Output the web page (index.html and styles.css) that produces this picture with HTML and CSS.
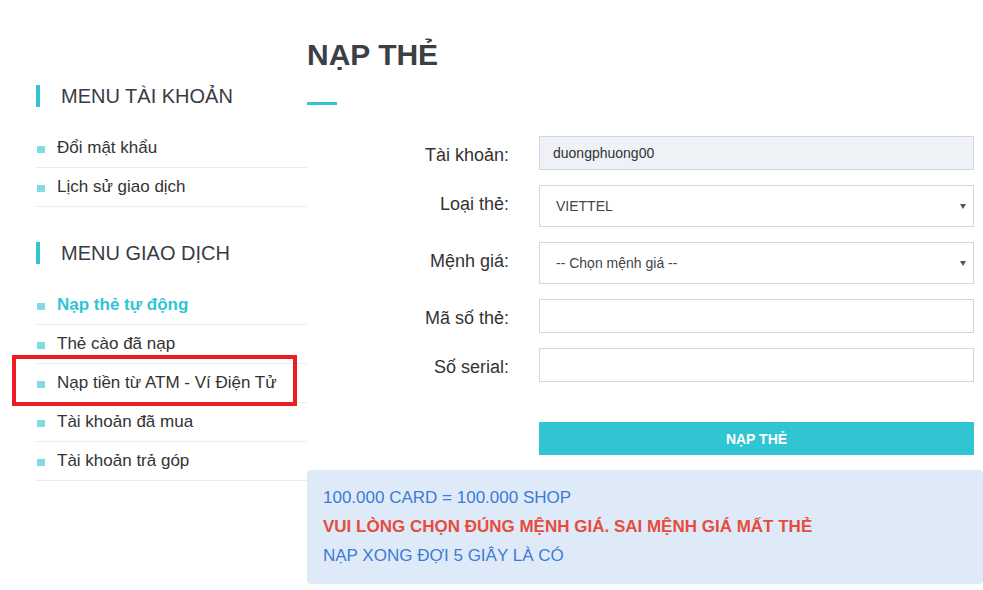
FILE: index.html
```html
<!DOCTYPE html>
<html lang="vi">
<head>
<meta charset="utf-8">
<title>Nạp thẻ</title>
<link rel="stylesheet" href="styles.css">
</head>
<body>
<div class="page">
  <aside class="sidebar">
    <h3 class="menu-title">MENU TÀI KHOẢN</h3>
    <ul class="menu">
      <li><a href="#">Đổi mật khẩu</a></li>
      <li><a href="#">Lịch sử giao dịch</a></li>
    </ul>
    <h3 class="menu-title second">MENU GIAO DỊCH</h3>
    <ul class="menu">
      <li class="active"><a href="#">Nạp thẻ tự động</a></li>
      <li><a href="#">Thẻ cào đã nạp</a></li>
      <li class="marked"><a href="#">Nạp tiền từ ATM - Ví Điện Tử</a><span class="mark"></span></li>
      <li><a href="#">Tài khoản đã mua</a></li>
      <li><a href="#">Tài khoản trả góp</a></li>
    </ul>
  </aside>
  <main class="main">
    <h1 class="title">NẠP THẺ</h1>
    <div class="title-line"></div>
    <form class="form">
      <label class="label">Tài khoản:</label>
      <input class="field readonly" type="text" value="duongphuong00" readonly>
      <label class="label">Loại thẻ:</label>
      <div class="select-wrap">
        <select class="field select">
          <option>VIETTEL</option>
        </select>
      </div>
      <label class="label">Mệnh giá:</label>
      <div class="select-wrap">
        <select class="field select">
          <option>-- Chọn mệnh giá --</option>
        </select>
      </div>
      <label class="label">Mã số thẻ:</label>
      <input class="field" type="text">
      <label class="label">Số serial:</label>
      <input class="field" type="text">
      <span class="spacer"></span>
      <button type="button" class="btn">NẠP THẺ</button>
    </form>
    <div class="notice">
      <p class="blue">100.000 CARD = 100.000 SHOP</p>
      <p class="red">VUI LÒNG CHỌN ĐÚNG MỆNH GIÁ. SAI MỆNH GIÁ MẤT THẺ</p>
      <p class="blue">NẠP XONG ĐỢI 5 GIÂY LÀ CÓ</p>
    </div>
  </main>
</div>
</body>
</html>
```

FILE: styles.css
```css
* { box-sizing: border-box; }
html, body { margin: 0; padding: 0; }
body {
  font-family: "Liberation Sans", Arial, sans-serif;
  color: #333;
  background: #fff;
  overflow: hidden;
}
.page {
  display: flex;
  padding-left: 36px;
}
.sidebar {
  width: 271px;
  flex: none;
}
.menu-title {
  margin: 85px 0 0 0;
  height: 22px;
  line-height: 22px;
  border-left: 4px solid #31c5d3;
  padding-left: 21px;
  font-size: 20px;
  font-weight: normal;
  color: #3a3a44;
}
.menu-title.second { margin-top: 35px; }
.menu {
  list-style: none;
  margin: 22px 0 0 0;
  padding: 0;
}
.menu li {
  position: relative;
  height: 39px;
  border-bottom: 1px solid #ededed;
  display: flex;
  align-items: center;
  font-size: 17px;
}
.menu li::before {
  content: "";
  width: 8px;
  height: 7px;
  margin: 3px 12px 0 1px;
  background: #82dbe2;
  flex: none;
}
.menu a {
  color: #333;
  text-decoration: none;
}
.menu li.active a {
  color: #31c5d3;
  font-weight: bold;
}
.mark {
  position: absolute;
  left: -24px;
  right: 10px;
  top: -9px;
  bottom: -4px;
  border: 4px solid #ed1c24;
  pointer-events: none;
}
.main {
  width: 676px;
  flex: none;
}
.title {
  margin: 0;
  padding-top: 37px;
  font-size: 30px;
  line-height: 36px;
  font-weight: bold;
  color: #3b4046;
}
.title-line {
  width: 30px;
  height: 3px;
  background: #31c5d3;
  margin-top: 29px;
}
.form {
  display: grid;
  grid-template-columns: 202px 435px;
  column-gap: 30px;
  row-gap: 15px;
  align-items: start;
  margin-top: 31px;
}
.label {
  text-align: right;
  font-size: 18px;
  line-height: 20px;
  padding-top: 9px;
  color: #333;
}
.field {
  display: block;
  width: 100%;
  height: 34px;
  border: 1px solid #d2d6de;
  background: #fff;
  font-family: "Liberation Sans", Arial, sans-serif;
  font-size: 14px;
  color: #333;
  padding: 0 13px;
  border-radius: 0;
  outline: none;
}
.field.readonly { background: #eef1f6; }
.select-wrap { position: relative; }
.select-wrap::after {
  content: "";
  position: absolute;
  right: 8px;
  top: 19px;
  border-left: 3px solid transparent;
  border-right: 3px solid transparent;
  border-top: 5px solid #555;
  pointer-events: none;
}
.select {
  height: 42px;
  -webkit-appearance: none;
  appearance: none;
  padding-left: 16px;
  color: #444;
}
.spacer { display: block; }
.btn {
  margin-top: 25px;
  height: 33px;
  border: none;
  background: #31c5d3;
  color: #fff;
  font-family: "Liberation Sans", Arial, sans-serif;
  font-weight: bold;
  font-size: 14px;
  cursor: pointer;
}
.notice {
  margin-top: 15px;
  background: #dfeaf8;
  border-radius: 4px;
  padding: 13px 16px 14px;
  font-size: 17px;
  line-height: 29px;
}
.notice p { margin: 0; }
.notice .blue { color: #3b7bd6; }
.notice .red { color: #e74c3c; font-weight: bold; }
```
